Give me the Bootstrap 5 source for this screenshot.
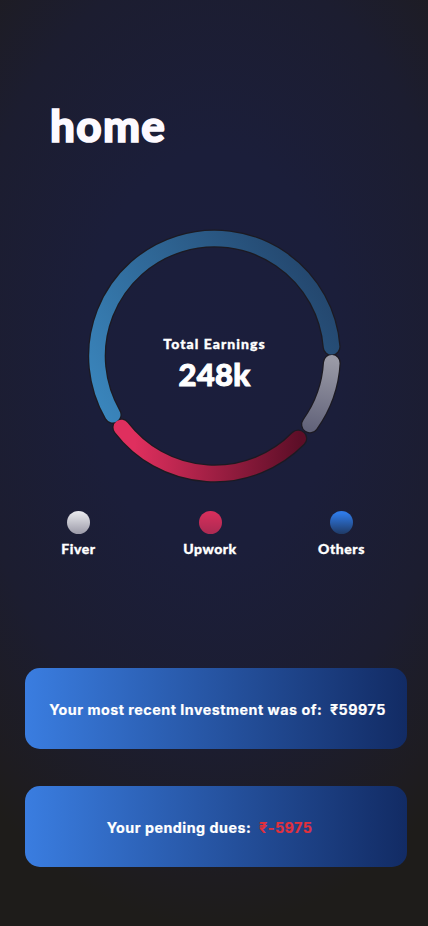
<!doctype html>
<html lang="en"><head><meta charset="utf-8"><title>home</title>
<link href="https://cdn.jsdelivr.net/npm/bootstrap@5.3.0/dist/css/bootstrap.min.css" rel="stylesheet">
<style>
html,body{height:100%}
body{background:radial-gradient(ellipse 85% 62% at 50% 38%,#1b1e3c 0%,#1b1e3a 35%,#1c1d30 68%,#1e1c20 92%,#1e1c1a 100%);background-color:#1e1c1a;color:#fff;font-family:"Lato","Liberation Sans",sans-serif}
.screen{width:428px;height:926px;overflow:hidden}
.page-title{font-family:"Lato",sans-serif;font-weight:900;font-size:44px;line-height:52px;letter-spacing:1.3px;margin:0;padding:99px 0 0 50px;color:#fdfaff;-webkit-text-stroke:1.6px #fdfaff}
.ring-box{width:262px;height:262px;margin:72px 0 0 83px;display:grid}
.ring-box svg{display:block;grid-area:1/1}
.ring-label{grid-area:1/1;z-index:1;text-align:center;align-self:center;padding:19px 0 0 1px}
.ring-sub{font-size:14px;line-height:18px;font-weight:900;letter-spacing:1.05px;-webkit-text-stroke:.35px #fff}
.ring-num{font-size:31px;line-height:36px;font-weight:900;margin-top:3px;letter-spacing:.3px;-webkit-text-stroke:1px #fff}
.legend-row{padding:25.5px 53.5px 0 45.5px}
.legend-item{width:66px;font-weight:900;font-size:14px;line-height:18px;letter-spacing:.55px;-webkit-text-stroke:.35px #fff}
.dot{width:23px;height:23px;border-radius:50%;margin-bottom:6px}
.dot-a{background:linear-gradient(#ececf0,#9b9aa8)}
.dot-b{background:linear-gradient(#d92f5c,#ab2a52)}
.dot-c{background:linear-gradient(#2f7ae6 10%,#1f3a66)}
.cards{padding:110px 21px 0 25px;gap:37px}
.info-card{height:81px;border-radius:15px;padding-top:3px;background:linear-gradient(90deg,#3a7de0,#122b64);font-family:"Inter",sans-serif;font-weight:700;font-size:14.3px;letter-spacing:.5px;color:#fff;-webkit-text-stroke:.2px currentColor}
.shift-a{padding-left:3px}
.shift-b{padding-right:13px}
.due{color:#e2303c}
</style></head><body>
<div class="screen">
<h1 class="page-title">home</h1>
<div class="ring-box">
<svg width="262" height="262" viewBox="83 223 262 262" xmlns="http://www.w3.org/2000/svg" fill="none" stroke-linecap="round">
<defs>
<linearGradient id="gb" gradientUnits="userSpaceOnUse" x1="100" y1="415" x2="335" y2="270"><stop offset="0" stop-color="#3a86bd"/><stop offset="1" stop-color="#224268"/></linearGradient>
<linearGradient id="gg" gradientUnits="userSpaceOnUse" x1="325" y1="358" x2="312" y2="430"><stop offset="0" stop-color="#9a9aa6"/><stop offset="1" stop-color="#62637a"/></linearGradient>
<linearGradient id="gr" gradientUnits="userSpaceOnUse" x1="135" y1="440" x2="300" y2="450"><stop offset="0" stop-color="#df2f5e"/><stop offset="1" stop-color="#5c0e27"/></linearGradient>
</defs>
<g stroke="#1c1a22" stroke-width="18">
<path d="M112.7 414.75A117.5 117.5 0 1 1 331.6 346.8"/>
<path d="M331.8 362.8A117.5 117.5 0 0 1 310 424.4"/>
<path d="M298.3 438.4A117.5 117.5 0 0 1 121.3 427.5"/>
</g>
<g stroke-width="15.5">
<path stroke="url(#gb)" d="M112.7 414.75A117.5 117.5 0 1 1 331.6 346.8"/>
<path stroke="url(#gg)" d="M331.8 362.8A117.5 117.5 0 0 1 310 424.4"/>
<path stroke="url(#gr)" d="M298.3 438.4A117.5 117.5 0 0 1 121.3 427.5"/>
</g>
</svg>
<div class="ring-label"><div class="ring-sub">Total Earnings</div><div class="ring-num">248k</div></div>
</div>
<div class="legend-row d-flex justify-content-between">
<div class="legend-item d-flex flex-column align-items-center"><div class="dot dot-a"></div>Fiver</div>
<div class="legend-item d-flex flex-column align-items-center"><div class="dot dot-b"></div>Upwork</div>
<div class="legend-item d-flex flex-column align-items-center"><div class="dot dot-c"></div>Others</div>
</div>
<div class="cards d-flex flex-column">
<div class="info-card shift-a d-flex align-items-center justify-content-center"><span>Your most recent Investment was of:&nbsp; ₹59975</span></div>
<div class="info-card shift-b d-flex align-items-center justify-content-center"><span>Your pending dues:&nbsp; <span class="due">₹-5975</span></span></div>
</div>
</div>
<script src="https://cdn.jsdelivr.net/npm/bootstrap@5.3.0/dist/js/bootstrap.bundle.min.js"></script>
</body></html>
